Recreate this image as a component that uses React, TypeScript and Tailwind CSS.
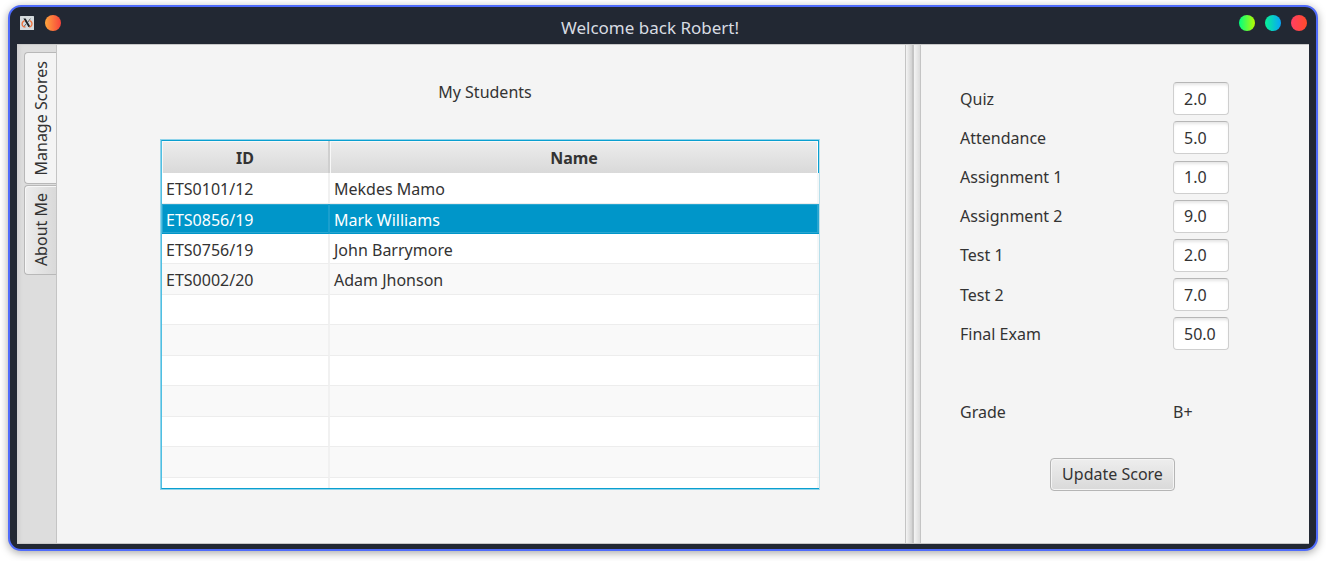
import { useState } from "react";
import clsx from "clsx";

type Row = { id: string; name: string; tall?: boolean };

const rows: Row[] = [
  { id: "ETS0101/12", name: "Mekdes Mamo", tall: true },
  { id: "ETS0856/19", name: "Mark Williams" },
  { id: "ETS0756/19", name: "John Barrymore" },
  { id: "ETS0002/20", name: "Adam Jhonson", tall: true },
  { id: "", name: "" },
  { id: "", name: "", tall: true },
  { id: "", name: "" },
  { id: "", name: "", tall: true },
  { id: "", name: "" },
  { id: "", name: "", tall: true },
  { id: "", name: "" },
];

const fields = [
  { label: "Quiz", value: "2.0" },
  { label: "Attendance", value: "5.0" },
  { label: "Assignment 1", value: "1.0" },
  { label: "Assignment 2", value: "9.0" },
  { label: "Test 1", value: "2.0" },
  { label: "Test 2", value: "7.0" },
  { label: "Final Exam", value: "50.0" },
];

function XLogo() {
  return (
    <svg viewBox="0 0 14 14" className="mt-px size-3.5" aria-hidden="true">
      <rect width="14" height="14" rx="0.5" fill="#d5dadd" />
      <path d="M3.4 2.6h2.2l5 8.4H8.4z" fill="#1c2024" />
      <path d="M10.4 2.6 7.8 6.2M6.2 7.8 3.6 11" stroke="#4a4f54" strokeWidth="0.9" />
      <path
        d="M4.6 4.6C2.4 5.4 1.6 7.6 2.4 9.4c.5 1.1 1.7 1.6 3 1.6M9.6 4.6c2 .6 2.8 2.6 2.2 4.4-.4 1.2-1.4 2-2.6 2"
        fill="none"
        stroke="#f0713c"
        strokeWidth="1.3"
      />
    </svg>
  );
}

function TitleBar() {
  return (
    <header className="flex h-[37px] shrink-0 items-start gap-[11px] pt-2 pr-[9px] pl-[10px]">
      <XLogo />
      <button aria-label="Pin" className="size-4 rounded-full bg-linear-to-r/srgb from-[#ffa53c] to-[#f8433c]" />
      <h1 className="flex-1 pt-px text-center text-[17px] leading-6 text-[#d8dce2]">Welcome back Robert!</h1>
      <div className="flex gap-[10px]">
        <button aria-label="Minimize" className="size-4 rounded-full bg-linear-to-r/srgb from-[#00ff80] to-[#b8fa00]" />
        <button aria-label="Maximize" className="size-4 rounded-full bg-linear-to-r/srgb from-[#08f294] to-[#08a4fa]" />
        <button aria-label="Close" className="size-4 rounded-full bg-linear-to-r/srgb from-[#ff3f63] to-[#ff4b2a]" />
      </div>
    </header>
  );
}

function SideTab({ label, active, onSelect }: { label: string; active: boolean; onSelect: () => void }) {
  return (
    <button
      role="tab"
      aria-selected={active}
      onClick={onSelect}
      className={clsx(
        "flex w-8 items-center justify-center rounded-l-[4px] border border-r-0 border-[#b8b8b8]",
        active
          ? "h-[132px] bg-[#f4f4f4]"
          : "h-[90px] bg-linear-to-r from-[#ededed] to-[#d9d9d9] shadow-[inset_1px_1px_0_#f7f7f7]",
      )}
    >
      <span className="rotate-180 whitespace-nowrap [writing-mode:vertical-rl]">{label}</span>
    </button>
  );
}

function StudentTable() {
  const [selected, setSelected] = useState(1);
  return (
    <div className="min-h-0 flex-1 overflow-hidden border border-[#8fd3ea] border-r-[#b9dfea]">
      <div className="h-full overflow-hidden border border-r-0 border-[#0a9fd0] border-l-[#4fbfe2] bg-white">
        <table className="w-full table-fixed border-separate border-spacing-0">
          <thead>
            <tr className="h-8">
              <th className="w-[168px] border-r-2 border-[#cfcfcf] bg-linear-to-b from-[#ededed] to-[#d9d9d9] p-0 pt-0.5 font-bold shadow-[inset_1px_1px_0_#f8f8f8]">
                ID
              </th>
              <th className="border-r border-[#0a9fd0] bg-linear-to-b from-[#ededed] to-[#d9d9d9] p-0 pt-0.5 font-bold shadow-[inset_1px_1px_0_#f8f8f8,inset_-1px_0_0_#ffffff]">
                Name
              </th>
            </tr>
          </thead>
          <tbody>
            {rows.map((row, i) => {
              const isSelected = i === selected;
              return (
                <tr
                  key={i}
                  onClick={() => row.id && setSelected(i)}
                  className={clsx(
                    row.tall ? "h-[31px]" : "h-[30px]",
                    isSelected ? "bg-[#0096c9] text-white" : i % 2 ? "bg-[#f9f9f9]" : "bg-white",
                  )}
                >
                  <td
                    className={clsx(
                      "border-r-2 border-b p-0 pt-0.5 pl-1",
                      isSelected
                        ? "border-r-[#1a9fce] border-b-[#0096c9] shadow-[inset_1px_1px_0_#2aa6d1,inset_0_-1px_0_#2aa6d1]"
                        : "border-r-[#f1f1f1] border-b-[#ededed]",
                    )}
                  >
                    {row.id}
                  </td>
                  <td
                    className={clsx(
                      "border-b p-0 pt-0.5 pl-1",
                      isSelected
                        ? "border-b-[#0096c9] shadow-[inset_-2px_1px_0_#2aa6d1,inset_0_-1px_0_#2aa6d1]"
                        : "border-[#ededed] shadow-[inset_-2px_0_0_#f4f7f8]",
                    )}
                  >
                    {row.name}
                  </td>
                </tr>
              );
            })}
          </tbody>
        </table>
      </div>
    </div>
  );
}

function Divider() {
  return (
    <div role="separator" aria-orientation="vertical" className="flex w-4 shrink-0 border-x border-[#c4c4c4]">
      <div className="flex-1 bg-linear-to-r from-[#f4f4f4] to-[#d2d2d2]" />
      <div className="w-0.5 bg-[#c4c4c4]" />
      <div className="flex-1 bg-linear-to-r from-[#f4f4f4] to-[#dcdcdc]" />
    </div>
  );
}

function ScoreForm() {
  return (
    <form onSubmit={(e) => e.preventDefault()} className="flex w-[388px] shrink-0 flex-col pt-[34px] pl-[39px]">
      <div className="grid h-[353px] grid-cols-[213px_56px] grid-rows-9 items-center">
        {fields.map((f, i) => (
          <div key={f.label} className="col-span-2 grid grid-cols-subgrid items-center">
            <label htmlFor={`score-${i}`}>{f.label}</label>
            <input
              id={`score-${i}`}
              defaultValue={f.value}
              className="h-[33px] w-full rounded-[4px] border border-[#cfcfcf] border-t-[#b6b6b6] bg-white px-[10px] shadow-[inset_0_3px_3px_-1px_#e6e6e6] outline-none"
            />
          </div>
        ))}
        <span className="col-start-1 row-start-9">Grade</span>
        <output className="row-start-9">B+</output>
      </div>
      <button className="mt-[26px] ml-[90px] h-[33px] w-[125px] rounded-[4px] border border-[#b5b5b5] bg-linear-to-b from-[#eeeeee] to-[#d9d9d9] pb-0.5 shadow-[inset_0_0_0_1px_#f4f4f4]">
        Update Score
      </button>
    </form>
  );
}

export default function App() {
  const [tab, setTab] = useState(0);
  return (
    <div className="flex h-screen min-h-[561px] flex-col bg-white px-2 pt-[5px] pb-[10px] font-['Noto_Sans',sans-serif] text-[16px] leading-6 text-[#333333]">
      <div className="flex min-h-0 flex-1 flex-col rounded-[13px] border-2 border-[#4f6bfb] bg-[#222833] shadow-[0_2px_8px_rgba(0,0,0,0.35)]">
        <TitleBar />
        <main className="mx-[7px] mb-[5px] flex min-h-0 flex-1 border-y border-[#c8c8c8] bg-[#f4f4f4]">
          <div
            role="tablist"
            aria-orientation="vertical"
            className="flex w-10 shrink-0 flex-col items-start gap-px border-r border-[#c4c4c4] bg-[#dddddd] pt-[7px] pl-[7px] shadow-[inset_4px_0_4px_-2px_#cccccc]"
          >
            <SideTab label="Manage Scores" active={tab === 0} onSelect={() => setTab(0)} />
            <SideTab label="About Me" active={tab === 1} onSelect={() => setTab(1)} />
          </div>
          <section className="flex min-w-0 flex-1 flex-col pt-[35px] pr-[85px] pb-[53px] pl-[103px]">
            <h2 className="mb-[35px] pr-[10px] text-center">My Students</h2>
            <StudentTable />
          </section>
          <Divider />
          <ScoreForm />
        </main>
      </div>
    </div>
  );
}
